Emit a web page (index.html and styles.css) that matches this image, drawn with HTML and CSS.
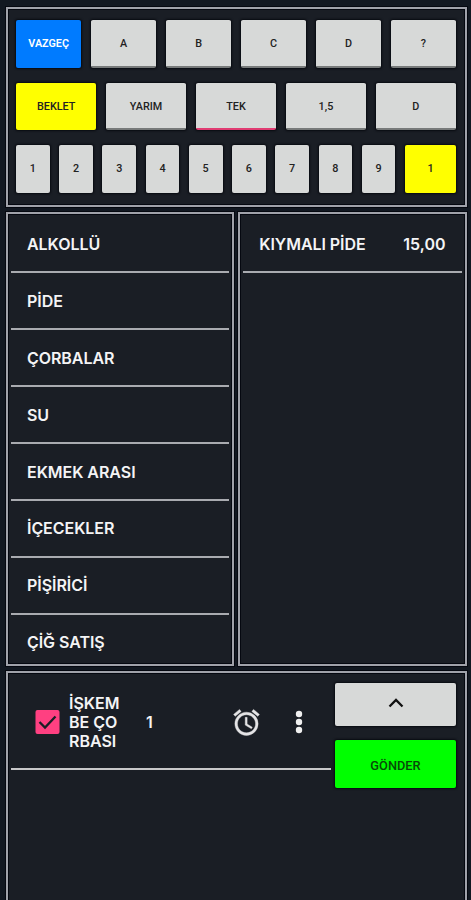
FILE: index.html
```html
<!DOCTYPE html>
<html lang="tr">
<head>
    <meta charset="UTF-8">
    <meta name="viewport" content="width=device-width, initial-scale=1.0">
    <title>Sipariş</title>
    <link rel="stylesheet" href="styles.css">
</head>
<body>
    <section class="panel keypad">
        <div class="keys">
            <button class="blue">VAZGEÇ</button>
            <button class="line">A</button>
            <button class="line">B</button>
            <button class="line">C</button>
            <button class="line">D</button>
            <button class="line">?</button>
        </div>
        <div class="keys">
            <button class="yellow">BEKLET</button>
            <button class="line">YARIM</button>
            <button class="line selected">TEK</button>
            <button class="line">1,5</button>
            <button class="line">D</button>
        </div>
        <div class="keys numbers">
            <button>1</button>
            <button>2</button>
            <button>3</button>
            <button>4</button>
            <button>5</button>
            <button>6</button>
            <button>7</button>
            <button>8</button>
            <button>9</button>
            <button class="yellow">1</button>
        </div>
    </section>

    <main class="lists">
        <ul class="panel list">
            <li><span>ALKOLLÜ</span></li>
            <li><span>PİDE</span></li>
            <li><span>ÇORBALAR</span></li>
            <li><span>SU</span></li>
            <li><span>EKMEK ARASI</span></li>
            <li><span>İÇECEKLER</span></li>
            <li><span>PİŞİRİCİ</span></li>
            <li><span>ÇİĞ SATIŞ</span></li>
        </ul>
        <ul class="panel list products">
            <li><span>KIYMALI PİDE</span><span class="price">15,00</span></li>
        </ul>
    </main>

    <section class="panel order">
        <div class="order-item">
            <svg class="check" viewBox="0 0 24 24">
                <rect width="24" height="24" rx="2" fill="#ff4081"/>
                <path d="M4 12l5.500 5.500L20 6.500" fill="none" stroke="#1a1e25" stroke-width="2.300"/>
            </svg>
            <div class="name">İŞKEM<br>BE ÇO<br>RBASI</div>
            <div class="qty">1</div>
            <svg class="alarm" viewBox="0 0 24 24" fill="#e4e4e6" stroke="#e4e4e6" stroke-width="0.300">
                <path d="M22 5.720l-4.600-3.860-1.290 1.530 4.600 3.860L22 5.720zM7.880 3.390L6.600 1.860 2 5.710l1.290 1.530 4.590-3.850zM12.500 8H11v6l4.750 2.850.750-1.230-4-2.370V8zM12 4c-4.970 0-9 4.030-9 9s4.020 9 9 9a9 9 0 0 0 0-18zm0 16c-3.870 0-7-3.130-7-7s3.130-7 7-7 7 3.130 7 7-3.130 7-7 7z"/>
            </svg>
            <svg class="dots" viewBox="0 0 8 24" fill="#f0f0f0">
                <circle cx="4" cy="4" r="3.200"/>
                <circle cx="4" cy="12" r="3.200"/>
                <circle cx="4" cy="20" r="3.200"/>
            </svg>
        </div>
        <div class="actions">
            <button class="up">
                <svg viewBox="0 0 16 10"><path d="M1.500 8.500L8 2l6.500 6.500" fill="none" stroke="#111" stroke-width="2.300"/></svg>
            </button>
            <button class="green">GÖNDER</button>
        </div>
    </section>
</body>
</html>
```
FILE: styles.css
```css
* {
    box-sizing: border-box;
}
body {
    margin: 0;
    padding: 6.5px 4.500px 0 6px;
    height: 900px;
    overflow: hidden;
    display: flex;
    flex-direction: column;
    gap: 5px;
    background-color: #121821;
    color: #f4f4f5;
    font-family: Inter, sans-serif;
}
.panel {
    margin: 0;
    border: 2px solid #a0a2aa;
    background-color: #1a1e25;
    box-shadow: 0 0 0 1px #050810, inset 0 0 0 1px #050810;
}
button {
    border: none;
    border-radius: 2px;
    padding: 0;
    background-color: #d7d9d8;
    color: #222;
    font-family: Roboto, sans-serif;
    font-size: 10.8px;
    font-weight: 500;
    box-shadow: 0 0 2px 1px #080b11;
}
.keypad {
    height: 200px;
    flex-shrink: 0;
    padding: 11.5px 8.500px 0 8px;
    display: flex;
    flex-direction: column;
    gap: 15px;
}
.keys {
    display: flex;
    gap: 9.6px;
}
.keys button {
    flex: 1;
    height: 47.500px;
}
.keys .line {
    border-top: 2px solid #d7d9d8;
    border-bottom: 2px solid #777a7a;
}
.keys .selected {
    border-bottom-color: #e03c72;
}
.keys .blue {
    background-color: #007bff;
    color: #fff;
    font-weight: 600;
}
.keys .yellow {
    background-color: #ffff00;
}
.numbers .yellow {
    flex: 0 0 51px;
}
.lists {
    height: 454px;
    flex-shrink: 0;
    display: flex;
    gap: 4px;
}
.list {
    flex: 1;
    padding: 3px;
    list-style: none;
    overflow: hidden;
    font-size: 16px;
    font-weight: 600;
    letter-spacing: -0.05px;
}
.list li {
    display: flex;
    justify-content: space-between;
    align-items: center;
    height: 56.900px;
    padding: 0 16px;
    border-bottom: 2px solid #a9abb0;
}
.list li:last-child {
    border-bottom-color: transparent;
}
.products li:last-child {
    border-bottom-color: #a9abb0;
}
.price {
    letter-spacing: 0;
}
.order {
    height: 250px;
    padding: 10.5px 8.500px 0 3px;
    display: flex;
    gap: 4px;
    flex-shrink: 0;
}
.order-item {
    flex: 1;
    height: 87px;
    display: flex;
    align-items: center;
    padding: 0 0 7px 24px;
    border-bottom: 2px solid #c8c8ca;
    font-size: 16px;
    font-weight: 600;
    line-height: 19px;
}
.check {
    width: 25px;
    height: 24px;
}
.name {
    width: 68px;
    margin-left: 9px;
}
.qty {
    margin-left: 9px;
    width: 85px;
}
.alarm {
    width: 31px;
    height: 31px;
}
.dots {
    width: 8px;
    height: 24px;
    margin-left: 33px;
}
.actions {
    width: 121px;
    display: flex;
    flex-direction: column;
    gap: 14px;
}
.actions .up {
    height: 43px;
}
.up svg {
    width: 16px;
    height: 10px;
}
.actions .green {
    height: 48px;
    padding-top: 2px;
    background-color: #00ff00;
    color: #084808;
    font-size: 12.800px;
}
```
